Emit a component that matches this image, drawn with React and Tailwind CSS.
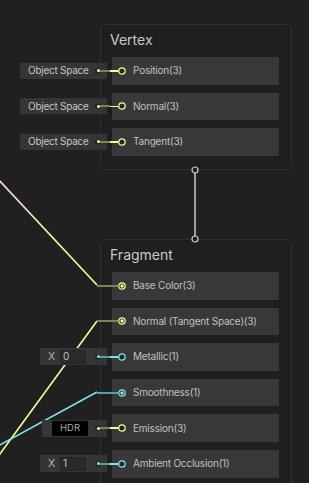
import React from "react";

const Y = "#f6ff9a";
const C = "#84e4e7";
const YD = "#80835a";
const CD = "#5a9ea0";

function Port({ color, filled }) {
  return (
    <svg className="relative z-10 shrink-0" width="10" height="10" viewBox="0 0 10 10">
      <circle cx="5" cy="5" r="3.2" fill="#262626" stroke={color} strokeWidth="1.2" />
      {filled && <circle cx="5" cy="5" r="1.7" fill={color} />}
    </svg>
  );
}

function Dot({ color }) {
  return (
    <div className="w-[6px] h-[6px] rounded-full bg-[#262626] flex items-center justify-center shrink-0">
      <div className="w-[3px] h-[3px] rounded-full" style={{ background: color }} />
    </div>
  );
}

/* short link drawn from an inline input's dot to the port */
function InputLink({ color, dim }) {
  return (
    <div className="absolute left-[80px] top-1/2 -translate-y-1/2 flex items-center">
      <div className="w-[10px] h-[2px]" style={{ background: dim }} />
      <div className="w-[9px] h-[1.5px]" style={{ background: color }} />
    </div>
  );
}

/* end of an incoming wire */
function WireIn({ dim }) {
  return (
    <div className="absolute left-[77px] w-[21px] h-[2px] top-1/2 -translate-y-1/2" style={{ background: dim }} />
  );
}

function ObjectSpace({ color }) {
  return (
    <div className="w-[87px] h-[16px] bg-[#353535] flex items-center justify-between pl-[8px] pr-[6px] text-[10px] tracking-[-0.25px] text-[#c4c4c4]">
      <span>Object Space</span>
      <Dot color={color} />
    </div>
  );
}

function FloatBox({ value, color }) {
  return (
    <div className="w-[67px] h-[17px] bg-[#353535] flex items-center justify-between pl-[8px] pr-[6px]">
      <div className="flex items-center">
        <span className="w-[12px] text-[10.5px] text-[#b4b4b4]">X</span>
        <div className="h-[14px] w-[26px] rounded-[2px] bg-[#2a2a2a] border border-[#242424] flex items-center pl-[2px] text-[10px] text-[#c4c4c4]">
          {value}
        </div>
      </div>
      <Dot color={color} />
    </div>
  );
}

function HdrBox({ color }) {
  return (
    <div className="w-[65px] h-[17px] bg-[#353535] flex items-center justify-between pl-[10px] pr-[6px]">
      <div className="h-[15px] w-[36px] bg-black flex items-center justify-center text-[9.5px] text-[#a8a8a8]">
        HDR
      </div>
      <Dot color={color} />
    </div>
  );
}

function Row({ label, left, link, port }) {
  return (
    <div className="relative flex items-center h-[27.6px] ml-[-92px]">
      <div className="w-[92px] h-full flex items-center justify-end pr-[5px]">{left}</div>
      <div className="flex-1 h-full bg-[#383838] flex items-center gap-[6px] pl-[5px] text-[10px] tracking-[-0.2px] text-[#c0c0c0]">
        {port}
        <span>{label}</span>
      </div>
      {link}
    </div>
  );
}

function Node({ title, className, children }) {
  return (
    <div className={"absolute left-[100px] w-[192px] rounded-[6px] border border-[#2f2f2f] bg-[#1f1f1f] " + className}>
      <div className="pl-[9px] pt-[6px] h-[32px] text-[14px] leading-[18px] text-[#c8c8c8]">{title}</div>
      <div className="ml-[11px] mr-[12px] flex flex-col gap-2">{children}</div>
    </div>
  );
}

export default function App() {
  return (
    <div
      className="relative w-[309px] h-[483px] bg-[#202020] overflow-hidden"
      style={{ fontFamily: "Inter, 'Liberation Sans', sans-serif" }}
    >
      <svg className="absolute inset-0" width="309" height="483">
        <defs>
          <linearGradient id="g1" gradientUnits="userSpaceOnUse" x1="0" y1="181" x2="97" y2="285">
            <stop offset="0" stopColor="#fbcbf4" />
            <stop offset="0.55" stopColor="#f3fa9e" />
            <stop offset="1" stopColor={Y} />
          </linearGradient>
        </defs>
        <path d="M -3 178 L 97 285" stroke="url(#g1)" strokeWidth="1.6" fill="none" />
        <path d="M -3 458 L 97 321" stroke={Y} strokeWidth="1.6" fill="none" />
        <path d="M -3 446.6 L 97 392" stroke={C} strokeWidth="1.6" fill="none" />
      </svg>

      <Node title="Vertex" className="top-[24px] h-[146px]">
        {["Position(3)", "Normal(3)", "Tangent(3)"].map((l) => (
          <Row
            key={l}
            label={l}
            left={<ObjectSpace color={Y} />}
            link={<InputLink color={Y} dim={YD} />}
            port={<Port color={Y} />}
          />
        ))}
      </Node>

      <Node title="Fragment" className="top-[239px] h-[260px]">
        <Row label="Base Color(3)" link={<WireIn dim={YD} />} port={<Port color={Y} filled />} />
        <Row label="Normal (Tangent Space)(3)" link={<WireIn dim={YD} />} port={<Port color={Y} filled />} />
        <Row
          label="Metallic(1)"
          left={<FloatBox value="0" color={C} />}
          link={<InputLink color={C} dim={CD} />}
          port={<Port color={C} />}
        />
        <Row label="Smoothness(1)" link={<WireIn dim={CD} />} port={<Port color={C} filled />} />
        <Row
          label="Emission(3)"
          left={<HdrBox color={Y} />}
          link={<InputLink color={Y} dim={YD} />}
          port={<Port color={Y} />}
        />
        <Row
          label="Ambient Occlusion(1)"
          left={<FloatBox value="1" color={C} />}
          link={<InputLink color={C} dim={CD} />}
          port={<Port color={C} />}
        />
      </Node>

      <svg className="absolute left-[190px] top-[165px]" width="10" height="80" viewBox="0 0 10 80">
        <line x1="5" y1="5" x2="5" y2="74" stroke="#c8c8c8" strokeWidth="1.5" />
        <circle cx="5" cy="5" r="3" fill="#202020" stroke="#d0d0d0" strokeWidth="1.2" />
        <circle cx="5" cy="74" r="3" fill="#202020" stroke="#d0d0d0" strokeWidth="1.2" />
      </svg>
    </div>
  );
}
